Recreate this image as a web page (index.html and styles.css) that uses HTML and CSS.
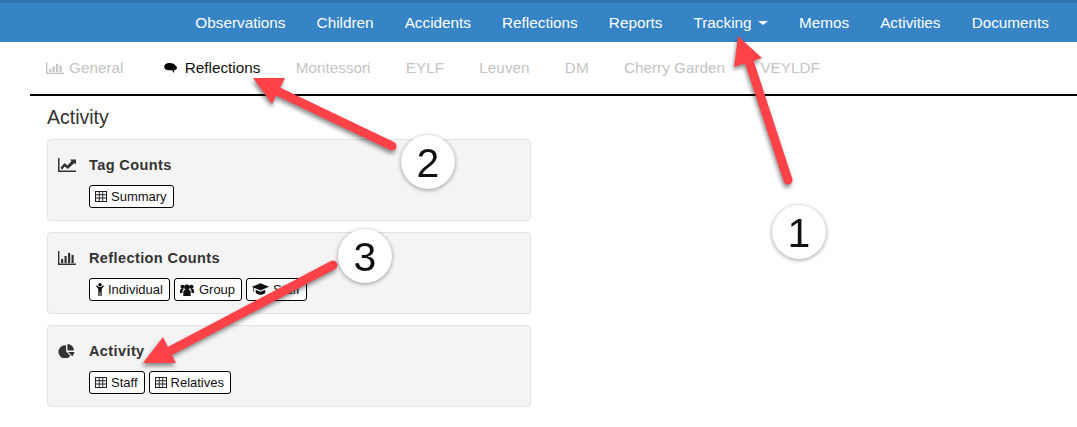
FILE: index.html
```html
<!DOCTYPE html>
<html lang="en">
<head>
<meta charset="utf-8">
<title>Activity</title>
<link rel="stylesheet" href="styles.css">
</head>
<body>
<svg class="defs" width="0" height="0" aria-hidden="true">
  <symbol id="i-bars" viewBox="0 0 18 14" preserveAspectRatio="none"><path d="M0 0h1.400v12.600H18V14H0z"/><path d="M3 8h2.200v4H3zM6.500 5h2.200v7H6.500zM10 2h2.200v10H10zM13.500 4h2.200v8h-2.200z"/></symbol>
  <symbol id="i-line" viewBox="0 0 18 14"><path d="M0 0h1.500v12.500H18V14H0z"/><path d="M2.500 9.800 6.500 5l3 2.500 4-4.500-1.500-1.500H18V6.500L16.500 5l-6.800 6-3-2.500-2.700 3.300z"/></symbol>
  <symbol id="i-table" viewBox="0 0 12 11"><path fill-rule="evenodd" d="M0 0h12v11H0zM1 1v2.300h2.800V1zM4.700 1v2.300h2.600V1zM8.200 1v2.300H11V1zM1 4.200v2.400h2.800V4.200zM4.700 4.200v2.400h2.600V4.200zM8.200 4.200v2.400H11V4.200zM1 7.500V10h2.800V7.500zM4.700 7.500V10h2.600V7.500zM8.200 7.500V10H11V7.500z"/></symbol>
  <symbol id="i-comment" viewBox="0 0 13 10"><path d="M5.500 0c3 0 5.500 1.200 6 2.800.8.300 1.500 1 1.500 1.900 0 1.200-1.300 1.900-2.400 2.200-.4.600-.8 2-1.500 3-.1-1-.4-1.900-.8-2.600C4.500 7.500 1.500 7 .6 5.200-.8 2.400 2 0 5.500 0z"/></symbol>
  <symbol id="i-person" viewBox="0 0 8 13"><circle cx="4" cy="1.800" r="1.800"/><path d="M0 3 .9 2.300 2.800 4h2.400l1.900-1.700L8 3 5.700 6v7H4.400V9h-.8v4H2.300V6z"/></symbol>
  <symbol id="i-group" viewBox="0 0 14 12"><circle cx="7" cy="3.200" r="2.800"/><circle cx="2.500" cy="2.800" r="2.100"/><circle cx="11.500" cy="2.800" r="2.100"/><path d="M3.300 12V8.500c0-1.800 1-2.700 2-2.700h3.400c1 0 2 .9 2 2.700V12zM0 9V6.500c0-1.100.7-1.600 1.500-1.600h2c-.7.900-1.100 2-1.100 4.100zM14 9V6.500c0-1.100-.7-1.600-1.500-1.600h-2c.7.900 1.100 2 1.100 4.100z"/></symbol>
  <symbol id="i-cap" viewBox="0 0 16 12"><path d="M8 0 16 3.500 8 7 2 4.400V8H1.200V4L0 3.500z"/><path d="M3.500 6.200 8 8.200l4.500-2V9c-1 1.300-2.800 2-4.500 2s-3.500-.7-4.500-2z"/></symbol>
  <symbol id="i-pie" viewBox="0 0 16 15"><path d="M7 1.500V8l4.500 4.500A7 7 0 1 1 7 1.500z"/><path d="M8.500 0A7 7 0 0 1 15.500 7H8.500z"/><path d="M9 8.500h7a7 7 0 0 1-2.300 4.500z"/></symbol>
</svg>

<nav class="topnav">
  <a class="topnav-link">Observations</a>
  <a class="topnav-link">Children</a>
  <a class="topnav-link">Accidents</a>
  <a class="topnav-link">Reflections</a>
  <a class="topnav-link">Reports</a>
  <a class="topnav-link">Tracking <span class="caret"></span></a>
  <a class="topnav-link">Memos</a>
  <a class="topnav-link">Activities</a>
  <a class="topnav-link">Documents</a>
</nav>

<div class="tabs">
  <a class="tab"><svg class="tab-icon"><use href="#i-bars"/></svg>General</a>
  <a class="tab tab-active"><svg class="tab-icon-comment"><use href="#i-comment"/></svg>Reflections</a>
  <a class="tab">Montessori</a>
  <a class="tab">EYLF</a>
  <a class="tab">Leuven</a>
  <a class="tab">DM</a>
  <a class="tab">Cherry Garden</a>
  <a class="tab">VEYLDF</a>
</div>

<main class="content">
  <h1 class="heading">Activity</h1>

  <section class="well">
    <h2 class="well-title"><svg class="well-icon"><use href="#i-line"/></svg>Tag Counts</h2>
    <div class="btn-row">
      <a class="btn"><svg class="btn-icon"><use href="#i-table"/></svg>Summary</a>
    </div>
  </section>

  <section class="well">
    <h2 class="well-title"><svg class="well-icon"><use href="#i-bars"/></svg>Reflection Counts</h2>
    <div class="btn-row">
      <a class="btn"><svg class="btn-icon-person"><use href="#i-person"/></svg>Individual</a>
      <a class="btn"><svg class="btn-icon-group"><use href="#i-group"/></svg>Group</a>
      <a class="btn"><svg class="btn-icon-cap"><use href="#i-cap"/></svg>Staff</a>
    </div>
  </section>

  <section class="well">
    <h2 class="well-title"><svg class="well-icon"><use href="#i-pie"/></svg>Activity</h2>
    <div class="btn-row">
      <a class="btn"><svg class="btn-icon"><use href="#i-table"/></svg>Staff</a>
      <a class="btn"><svg class="btn-icon"><use href="#i-table"/></svg>Relatives</a>
    </div>
  </section>
</main>

<svg class="annotations" viewBox="0 0 1077 427" width="1077" height="427" aria-hidden="true">
  <g class="arrow">
    <path class="arrow-shaft" d="M788 180 748 58"/>
    <path class="arrow-head" d="M738 36 762 58 734 67z"/>
  </g>
  <g class="arrow">
    <path class="arrow-shaft" d="M392 146 275 90"/>
    <path class="arrow-head" d="M253 78H285L272 104z"/>
  </g>
  <g class="arrow">
    <path class="arrow-shaft" d="M333 265 168 352"/>
    <path class="arrow-head" d="M143 363 163 337 176 363z"/>
  </g>
  <g class="badge"><circle cx="799" cy="232" r="27"/><text x="799" y="247">1</text></g>
  <g class="badge"><circle cx="428" cy="162" r="27"/><text x="428" y="177">2</text></g>
  <g class="badge"><circle cx="365" cy="256" r="27"/><text x="365" y="271">3</text></g>
</svg>
</body>
</html>
```
FILE: styles.css
```css
* { box-sizing: border-box; }

html, body {
  margin: 0;
  height: 427px;
  overflow: hidden;
  background: #fff;
  font-family: "Liberation Sans", Arial, sans-serif;
  color: #333;
}

body { position: relative; }

.defs { position: absolute; }

.topnav {
  display: flex;
  justify-content: flex-end;
  align-items: center;
  gap: 31.100px;
  height: 42px;
  padding: 3px 28px 0 0;
  background: #3683c5;
  border-top: 3px solid #2f72ad;
}

.topnav-link {
  color: #fff;
  font-size: 15.300px;
  line-height: 20px;
  margin-top: -3px;
}

.caret {
  display: inline-block;
  width: 0;
  height: 0;
  margin-left: 2px;
  vertical-align: middle;
  border-top: 4px solid #fff;
  border-left: 5px solid transparent;
  border-right: 5px solid transparent;
}

.tabs {
  display: flex;
  align-items: center;
  gap: 35.300px;
  height: 54px;
  margin-left: 30px;
  padding: 0 0 0 16px;
  border-bottom: 2px solid #000;
}

.tab {
  display: flex;
  align-items: center;
  color: #c4c4c4;
  font-size: 15.300px;
  line-height: 20px;
}

.tab-active { color: #111; }

.tab-icon {
  width: 18px;
  height: 12px;
  margin-right: 5px;
  fill: #c4c4c4;
}

.tab-icon-comment {
  width: 13px;
  height: 10px;
  margin: 0 8px 0 5px;
  fill: #000;
}

.content {
  width: 484px;
  margin-left: 47px;
}

.heading {
  margin: 9px 0 10px;
  font-size: 19.500px;
  line-height: 24px;
  font-weight: 400;
  color: #333;
}

.well {
  height: 82px;
  margin-bottom: 11px;
  padding: 16px 10px 0;
  background: #f4f4f4;
  border: 1px solid #e3e3e3;
  border-radius: 4px;
}

.well-title {
  display: flex;
  align-items: center;
  height: 18px;
  margin: 0 0 11px;
  font-size: 14.500px;
  font-weight: 700;
  letter-spacing: .4px;
  color: #333;
}

.well-icon {
  width: 18px;
  height: 14px;
  margin-right: 13px;
  fill: #333;
}

.btn-row {
  display: flex;
  gap: 4px;
  padding-left: 31px;
}

.btn {
  display: flex;
  align-items: center;
  height: 23px;
  padding: 0 6px 0 5px;
  background: #fff;
  border: 1px solid #000;
  border-radius: 3px;
  color: #111;
  font-size: 13px;
}

.btn-icon {
  width: 12px;
  height: 11px;
  margin-right: 4px;
  fill: #222;
}

.btn-icon-person {
  width: 8px;
  height: 13px;
  margin: 0 4px 0 1px;
  fill: #111;
}

.btn-icon-group {
  width: 14px;
  height: 12px;
  margin-right: 5px;
  fill: #111;
}

.btn-icon-cap {
  width: 17px;
  height: 13px;
  margin-right: 4px;
  fill: #111;
}

.annotations {
  position: absolute;
  left: 0;
  top: 0;
  pointer-events: none;
}

.arrow { filter: drop-shadow(-1px 3px 2px rgba(0, 0, 0, .45)); }

.arrow-shaft {
  fill: none;
  stroke: #ff4248;
  stroke-width: 9;
  stroke-linecap: round;
}

.arrow-head { fill: #ff4248; }

.badge { filter: drop-shadow(0 1px 2px rgba(0, 0, 0, .4)); }

.badge circle { fill: #fff; }

.badge text {
  font-family: "Liberation Sans", Arial, sans-serif;
  font-size: 41px;
  text-anchor: middle;
  fill: #111;
}
```
